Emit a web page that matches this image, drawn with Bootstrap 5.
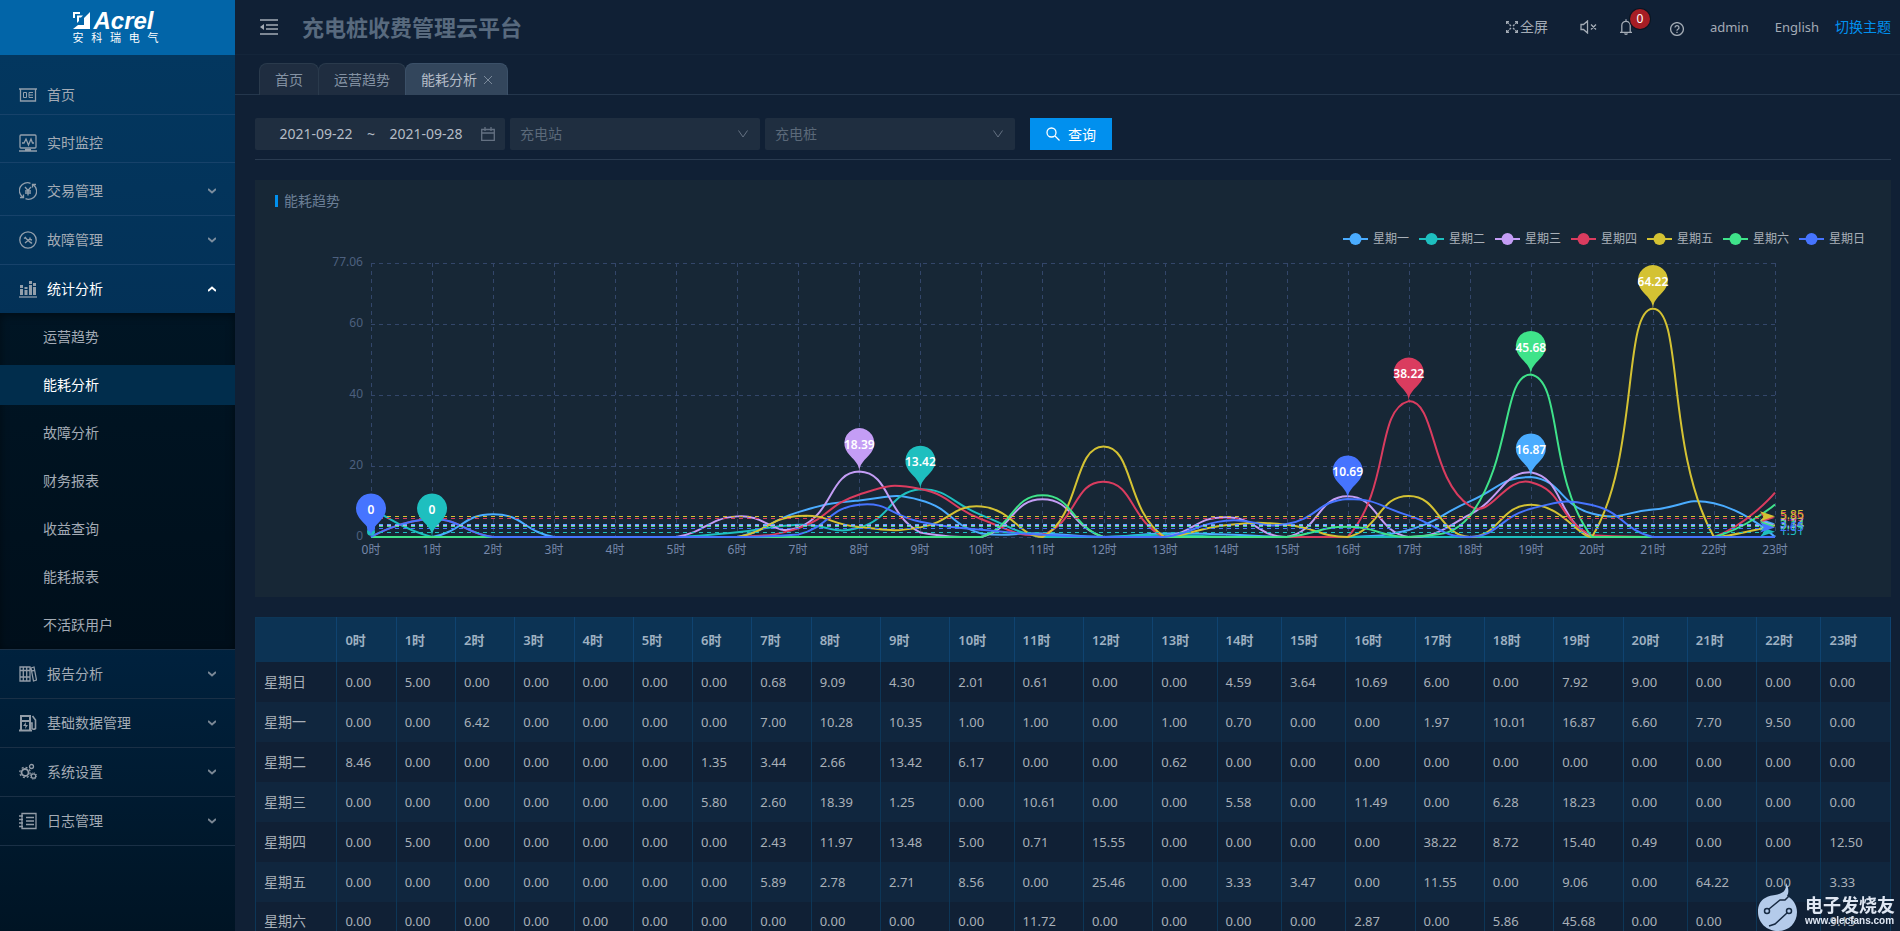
<!DOCTYPE html>
<html lang="zh-CN" data-bs-theme="dark">
<head>
<meta charset="utf-8">
<meta name="viewport" content="width=device-width, initial-scale=1">
<title>充电桩收费管理云平台</title>
<link href="https://cdn.jsdelivr.net/npm/bootstrap@5.3.0/dist/css/bootstrap.min.css" rel="stylesheet">
<style>
  :root { --page: #102035; --line: #24364c; --muted: #a3abb5; --brand: #0190ee; }
  body { font-family: "Noto Sans", "Noto Sans CJK SC", sans-serif; font-size: 14px; line-height: 22px; background: var(--page); color: var(--muted); }
  a { color: inherit; text-decoration: none; }
  svg { display: block; flex: none; }
  .ico { fill: none; stroke: currentColor; stroke-width: 1.3; }

  /* side menu */
  .side { width: 235px; background: linear-gradient(180deg, #03375f 55px, #033157 320px, #00213d 660px, #001424 931px); }
  .brand { height: 55px; padding-right: 4px; background: #0265a8; color: #fff; }
  .brand-mark { width: 86px; }
  .brand-name { font: italic bold 24px/20px "Liberation Sans", sans-serif; }
  .brand-cn { font-size: 11px; line-height: 14px; text-align-last: justify; }
  .side-item { height: 49px; padding: 0 19px; gap: 10px; border-bottom: 1px solid #17426a; }
  .side-item:hover, .side-item.open { color: #fff; }
  .side-item.open { border-bottom: 0; height: 48px; }
  .side-item .ico { color: var(--muted); opacity: .9; }
  .side-item .caret { stroke-width: 2; opacity: .75; }
  .side-item.open .caret { color: #fff; opacity: 1; }
  .side-item.low { border-color: #1a3046; }
  .side-first { height: 40px; margin-top: 20px; }
  .side-plain { height: 48px; padding-top: 8px; }
  .side-tall { height: 53px; padding-top: 4px; }
  .side-sub { background: linear-gradient(180deg, #001524, #000f1b); box-shadow: inset 0 2px 8px rgba(0,0,0,.45); border-bottom: 1px solid #1a3046; }
  .side-sub li { padding: 4px 0; }
  .side-sub a { display: block; height: 40px; line-height: 40px; padding-left: 43px; }
  .side-sub a.active { background: #012d4c; color: #fff; }

  /* top bar */
  .topbar { height: 55px; padding: 0 9px 0 25px; border-bottom: 1px solid #14253a; }
  .topbar h1 { font-size: 22px; line-height: 32px; font-weight: 700; color: #586a7e; }
  .tool { background: none; border: 0; padding: 0; color: var(--muted); }
  .full { gap: 2px; margin-right: 32px; }
  .mute { margin-right: 23px; }
  .notice { margin-right: 38px; }
  .notice-count { position: absolute; left: 10px; top: -10px; width: 20px; height: 20px; border-radius: 10px; background: #a61d24; color: #fff; font-size: 12px; line-height: 20px; text-align: center; box-shadow: 0 0 0 1px #0a1522; }
  .latin { font-size: 13px; margin-left: 26px; }
  .theme { color: var(--brand); }
  .tabs { padding: 8px 24px 0; height: 40px; border-bottom: 1px solid var(--line); }
  .tab { height: 32px; padding: 0 15px; border: 1px solid #2a3a4c; border-bottom: 0; border-radius: 8px 8px 0 0; background: #1f2d40; color: #8492a3; margin-right: -1px; }
  .tab.active { background: #33465c; border-color: #3b5068; color: #b3bcc7; gap: 7px; }
  .tab.active .ico { color: #7b8a9b; }

  /* filters */
  .content { padding: 23px 9px 0 20px; }
  .filters { gap: 5px; padding-bottom: 9px; border-bottom: 1px solid #2a3b50; }
  .field { width: 250px; height: 32px; background-color: #1f2e40; border: 0; border-radius: 2px; color: #b5bcc5; }
  .date-range { padding: 0 10px; }
  .field input { flex: 1 1 0; min-width: 0; background: none; border: 0; padding: 0; color: inherit; text-align: center; }
  .date-range .ico { color: #647182; margin-left: 4px; }
  .form-select.field { font-size: 14px; line-height: 22px; padding: 0 40px 0 10px; color: #5b6979; background-size: 14px 14px; background-position: right 10px center;
    --bs-form-select-bg-img: url("data:image/svg+xml,%3csvg xmlns='http://www.w3.org/2000/svg' viewBox='0 0 14 14' fill='none' stroke='%23647182'%3e%3cpath d='M2.500 3.500 7 10l4.500-6.500'/%3e%3c/svg%3e"); }
  .btn-query { width: 82px; height: 32px; margin-left: 10px; padding: 0; gap: 8px; border: 0; border-radius: 0; background: var(--brand); color: #fff; font-size: 14px; }

  /* chart */
  .panel { margin-top: 20px; background: #172736; }
  .panel h2 { font-size: 14px; line-height: 22px; font-weight: 400; color: #6b7f96; margin: 0; padding: 10px 20px 16px; gap: 6px; }
  .panel h2::before { content: ""; width: 3px; height: 12px; background: var(--brand); }
  .legend-row { gap: 10px; padding: 0 26px 0 0; font-size: 12px; color: #a9b0b8; }
  .legend-row li { gap: 5px; }
  .chart { width: 100%; height: 347px; font-size: 12px; }

  /* table */
  .hours { --bs-table-bg: transparent; table-layout: fixed; margin: 20px 0 0; border: 1px solid #0d3657; color: var(--muted); }
  .hours th, .hours td { height: 40px; padding: 0 0 0 8px; vertical-align: middle; border: solid #0d3657; border-width: 0 1px 0 0; color: #a9b0b8; font-size: 13px; font-weight: 400; }
  .hours thead th { height: 44px; background: #0c3354; border-color: #0f4370; font-weight: 600; color: #9fb1c2; }
  .hours tbody th { font-size: 14px; }
  .hours tbody tr:nth-child(even) { background: #10263e; }
  .w-first { width: 81px; } .w-a { width: 59px; } .w-b { width: 64px; } .w-c { width: 69px; }

  .scroller { scrollbar-width: none; }
  .scroller::-webkit-scrollbar { display: none; }

  .stamp { position: fixed; right: 5px; bottom: 0; gap: 7px; color: #dfe6f2; pointer-events: none; }
  .stamp b { font-size: 18px; line-height: 20px; }
  .stamp small { font: bold 10px/12px "Liberation Sans", sans-serif; }
</style>
</head>
<body class="d-flex vh-100 overflow-hidden">

<aside class="side flex-shrink-0 h-100 overflow-hidden">
  <a href="#" class="brand d-flex justify-content-center align-items-center">
    <span class="brand-mark">
      <span class="d-flex gap-1 align-items-center">
        <svg width="17" height="17" viewBox="0 0 17 17"><path fill="#fff" d="M17 0v17H0l5-4h6V6zM0 0h7v2H2v4H0zM4 3.500h6L8 5.500H6V9l-2 2z"/></svg>
        <span class="brand-name">Acrel</span>
      </span>
      <span class="brand-cn d-block">安科瑞电气</span>
    </span>
  </a>
  <nav class="d-flex flex-column">
    <a href="#" class="side-item side-first d-flex align-items-center">
      <svg class="ico" width="18" height="18" viewBox="0 0 18 18"><path d="M0 3h18M1.500 3v12h15V3"/><path stroke-width="1" d="M4.500 6.500h3v5h-3zM10 6.500v5M14 6.500h-4M10 9h4M10 11.500h4"/></svg>首页</a>
    <a href="#" class="side-item side-plain d-flex align-items-center">
      <svg class="ico" width="18" height="18" viewBox="0 0 18 18"><rect x="1" y="1" width="16" height="13" rx="1"/><path d="M3 9h2l2-4 2.500 6L12 5l1.500 4H15M0 17h18M6 15.500h6"/></svg>实时监控</a>
    <a href="#" class="side-item side-tall d-flex align-items-center">
      <svg class="ico" width="18" height="18" viewBox="0 0 18 18"><path d="M3.500 15A8 8 0 0 1 11.500 1.300M14.500 3A8 8 0 0 1 6.500 16.700M1 15.500h3.500V12.500M17 2.500h-3.500v3M6 5l3 3.500L12 5M9 8.500V13.500M6 9h6M6 11h6"/></svg>交易管理
      <svg class="ico caret ms-auto" width="8" height="6" viewBox="0 0 8 6"><path d="M0 1l4 3.500L8 1"/></svg></a>
    <a href="#" class="side-item d-flex align-items-center">
      <svg class="ico" width="18" height="18" viewBox="0 0 18 18"><circle cx="9" cy="9" r="8.200"/><path d="M6.500 7l5.500 5M6 12l5.500-4.500M5 7.500L7 6M11 6.500v2l2 .5M11.500 11l1.500 1.500"/></svg>故障管理
      <svg class="ico caret ms-auto" width="8" height="6" viewBox="0 0 8 6"><path d="M0 1l4 3.500L8 1"/></svg></a>
    <a href="#" class="side-item open d-flex align-items-center">
      <svg class="ico" width="18" height="18" viewBox="0 0 18 18"><path d="M0 17h18"/><path stroke-width="3" d="M2.500 5v3M2.500 9v6M7 7v2M7 10v5M11.500 1v3M11.500 5v10M15.500 3v3M15.500 7v8"/></svg>统计分析
      <svg class="ico caret ms-auto" width="8" height="6" viewBox="0 0 8 6"><path d="M0 5l4-3.500L8 5"/></svg></a>
    <ul class="side-sub list-unstyled mb-0">
      <li><a href="#">运营趋势</a></li>
      <li><a href="#" class="active" aria-current="page">能耗分析</a></li>
      <li><a href="#">故障分析</a></li>
      <li><a href="#">财务报表</a></li>
      <li><a href="#">收益查询</a></li>
      <li><a href="#">能耗报表</a></li>
      <li><a href="#">不活跃用户</a></li>
    </ul>
    <a href="#" class="side-item low d-flex align-items-center">
      <svg class="ico" width="18" height="18" viewBox="0 0 18 18"><path d="M1 2h10v14H1zM4.300 2v14M7.700 2v14M1 5.500h10M1 12h10M12 3l3-1 2.500 13-3 1zM12.500 6l3-.7"/></svg>报告分析
      <svg class="ico caret ms-auto" width="8" height="6" viewBox="0 0 8 6"><path d="M0 1l4 3.500L8 1"/></svg></a>
    <a href="#" class="side-item low d-flex align-items-center">
      <svg class="ico" width="18" height="18" viewBox="0 0 18 18"><path stroke-width="2" d="M2 16V2h9v14M0 16.500h13M2 7h9"/><path stroke-width="1.600" d="M11 9h2v5.500q1.500 1.500 3.500 0V6l-3-4"/><path fill="currentColor" stroke="none" d="M7 8l-3 4h2.500L6 15l3-4H6.800z"/></svg>基础数据管理
      <svg class="ico caret ms-auto" width="8" height="6" viewBox="0 0 8 6"><path d="M0 1l4 3.500L8 1"/></svg></a>
    <a href="#" class="side-item low d-flex align-items-center">
      <svg class="ico" width="18" height="18" viewBox="0 0 18 18"><circle cx="6" cy="9.500" r="3.500" stroke-width="1.800"/><circle cx="6" cy="9.500" r="5.200" stroke-dasharray="2 2.080"/><circle cx="12.500" cy="3.500" r="2"/><circle cx="14.500" cy="13" r="2.200"/><circle cx="14.500" cy="13" r="3.200" stroke-width="1" stroke-dasharray="1.200 1.300"/></svg>系统设置
      <svg class="ico caret ms-auto" width="8" height="6" viewBox="0 0 8 6"><path d="M0 1l4 3.500L8 1"/></svg></a>
    <a href="#" class="side-item low d-flex align-items-center">
      <svg class="ico" width="18" height="18" viewBox="0 0 18 18"><path d="M3 1.500h14v15H3zM7 5.500h8M7 9h8M7 12.500h8M0 4h4M0 7.500h4M0 11h4M0 14.500h4"/></svg>日志管理
      <svg class="ico caret ms-auto" width="8" height="6" viewBox="0 0 8 6"><path d="M0 1l4 3.500L8 1"/></svg></a>
  </nav>
</aside>

<div class="scroller flex-grow-1 h-100 overflow-auto">
  <header class="topbar d-flex align-items-center">
    <button class="tool me-4" type="button" aria-label="收起菜单">
      <svg class="ico" width="18" height="18" viewBox="0 0 18 18"><path stroke-width="1.600" d="M0 2h18M6 7h12M6 11h12M0 16h18"/><path fill="currentColor" stroke="none" d="M0 9l4-3v6z"/></svg></button>
    <h1 class="mb-0">充电桩收费管理云平台</h1>
    <div class="ms-auto d-flex align-items-center">
      <button class="tool full d-flex align-items-center" type="button">
        <svg class="ico" width="12" height="12" viewBox="0 0 12 12"><path stroke-dasharray="2.500 1" d="M1 1l4 4M11 1L7 5M1 11l4-4M11 11L7 7"/><path d="M.6 3V.6H3M9 .6h2.400V3M.6 9v2.400H3M9 11.400h2.400V9"/></svg>全屏</button>
      <button class="tool mute" type="button" aria-label="静音">
        <svg class="ico" width="17" height="14" viewBox="0 0 17 14"><path d="M1 4.500h2.500L7.500 1v12L3.500 9.500H1zM11 4.500l5 5M16 4.500l-5 5"/></svg></button>
      <button class="tool notice position-relative" type="button" aria-label="通知">
        <svg class="ico" width="12" height="16" viewBox="0 0 12 16"><path d="M0 13.400h12M1.800 13V6.500a4.200 4.200 0 0 1 8.400 0V13M6 .3v2M4.500 14.500q1.500 1.500 3 0"/></svg>
        <span class="notice-count">0</span></button>
      <button class="tool mt-1" type="button" aria-label="帮助">
        <svg class="ico" width="14" height="14" viewBox="0 0 14 14"><circle cx="7" cy="7" r="6.400"/><path d="M5 5.600a2 2 0 1 1 2.600 1.900q-.6.300-.6 1.200M7 9.700V11"/></svg></button>
      <a href="#" class="latin">admin</a>
      <a href="#" class="latin">English</a>
      <a href="#" class="theme ms-3">切换主题</a>
    </div>
  </header>

  <nav class="tabs d-flex">
    <a href="#" class="tab d-flex align-items-center">首页</a>
    <a href="#" class="tab d-flex align-items-center">运营趋势</a>
    <a href="#" class="tab active d-flex align-items-center" aria-current="page">能耗分析
      <svg class="ico" width="8" height="8" viewBox="0 0 8 8"><path stroke-width="1" d="M0 0l8 8M8 0L0 8"/></svg></a>
  </nav>

  <main class="content">
    <form class="filters d-flex">
      <div class="field date-range d-flex align-items-center">
        <input type="text" value="2021-09-22" aria-label="开始日期"><span>~</span>
        <input type="text" value="2021-09-28" aria-label="结束日期">
        <svg class="ico" width="14" height="14" viewBox="0 0 14 14"><path d="M.7 2.500h12.600v10.800H.7zM.7 6h12.600M4 0v4M10 0v4"/></svg>
      </div>
      <select class="form-select field" aria-label="充电站"><option>充电站</option></select>
      <select class="form-select field" aria-label="充电桩"><option>充电桩</option></select>
      <button class="btn btn-query d-flex align-items-center justify-content-center" type="button">
        <svg class="ico" width="14" height="14" viewBox="0 0 14 14"><circle cx="5.500" cy="5.500" r="4.500"/><path d="M9 9l4.500 4.500"/></svg>查询</button>
    </form>

    <section class="panel">
      <h2 class="d-flex align-items-center">能耗趋势</h2>
      <ul class="legend-row list-unstyled d-flex justify-content-end mb-0" id="legend"></ul>
      <svg class="chart" id="chart" role="img" aria-label="能耗趋势"></svg>
    </section>

    <table class="hours table" id="hours"></table>
  </main>
</div>

<div class="stamp d-flex align-items-end">
  <svg width="40" height="48" viewBox="0 0 40 48"><path fill="#b4cbea" d="M28 0c3 5 3 10 1 13 6 3 10 9 10 16 0 11-8 19-19 19S0 40 0 29C0 16 9 13 17 12 24 11 29 8 28 0z"/><path fill="none" stroke="#172a42" stroke-width="1.500" d="M11 26L22 17h5l4-4M29 30L17 41l-6 2"/><circle cx="9" cy="28" r="2.500" fill="none" stroke="#172a42" stroke-width="1.500"/><circle cx="31" cy="28" r="2.500" fill="none" stroke="#172a42" stroke-width="1.500"/></svg>
  <span class="d-flex flex-column pb-1"><b>电子发烧友</b><small>www.elecfans.com</small></span>
</div>

<script src="https://cdn.jsdelivr.net/npm/bootstrap@5.3.0/dist/js/bootstrap.bundle.min.js"></script>
<script>
// hour: kWh, missing hours are zero
const days = [
  { name: '星期一', color: '#4aacff', use: {2:6.42,7:7,8:10.28,9:10.35,10:1,11:1,13:1,14:.7,17:1.97,18:10.01,19:16.87,20:6.6,21:7.7,22:9.5} },
  { name: '星期二', color: '#1ebfbf', use: {0:8.46,6:1.35,7:3.44,8:2.66,9:13.42,10:6.17,13:.62} },
  { name: '星期三', color: '#c49df5', use: {6:5.8,7:2.6,8:18.39,9:1.25,11:10.61,14:5.58,16:11.49,18:6.28,19:18.23} },
  { name: '星期四', color: '#da3c5f', use: {1:5,7:2.43,8:11.97,9:13.48,10:5,11:.71,12:15.55,17:38.22,18:8.72,19:15.4,20:.49,23:12.5} },
  { name: '星期五', color: '#d4c233', use: {7:5.89,8:2.78,9:2.71,10:8.56,12:25.46,14:3.33,15:3.47,17:11.55,19:9.06,21:64.22,23:3.33} },
  { name: '星期六', color: '#3fe38a', use: {11:11.72,16:2.87,18:5.86,19:45.68,23:9.15} },
  { name: '星期日', color: '#4674ff', use: {1:5,7:.68,8:9.09,9:4.3,10:2.01,11:.61,14:4.59,15:3.64,16:10.69,17:6,19:7.92,20:9} }
];
days.forEach(d => d.v = Array.from({ length: 24 }, (_, h) => d.use[h] || 0));

document.getElementById('legend').innerHTML = days.map(d =>
  `<li class="d-flex align-items-center"><svg width="25" height="12"><path d="M0 6h25" stroke="${d.color}" stroke-width="2"/><circle cx="12.5" cy="6" r="6" fill="${d.color}"/></svg>${d.name}</li>`).join('');

// two-digit columns are wider than the rest
const wide = 'aaaaaaaaccbccbbbccccbcbc';
const rows = [days[6], ...days.slice(0, 6)];
document.getElementById('hours').innerHTML =
  '<colgroup><col class="w-first">' + [...wide].map(w => `<col class="w-${w}">`).join('') + '</colgroup>' +
  '<thead><tr><th></th>' + days[0].v.map((_, h) => `<th scope="col">${h}时</th>`).join('') + '</tr></thead><tbody>' +
  rows.map(d => `<tr><th scope="row">${d.name}</th>` + d.v.map(n => `<td>${n.toFixed(2)}</td>`).join('') + '</tr>').join('') + '</tbody>';

function curve(p) {
  const ys = p.map(q => q[1]), lo = Math.min(...ys), hi = Math.max(...ys);
  const fit = c => [c[0], Math.max(lo, Math.min(hi, c[1]))];
  let path = `M${p[0]}`, c0 = p[0];
  for (let i = 1; i < p.length; i++) {
    const a = p[i - 1], b = p[i], n = p[i + 1];
    let c1 = b, next = b;
    if (n) {
      const vx = n[0] - a[0], vy = n[1] - a[1];
      const before = Math.hypot(b[0] - a[0], b[1] - a[1]), after = Math.hypot(n[0] - b[0], n[1] - b[1]);
      const r = after / (before + after);
      c1 = [b[0] - vx * .5 * (1 - r), b[1] - vy * .5 * (1 - r)];
      next = [b[0] + vx * .5 * r, b[1] + vy * .5 * r];
    }
    path += `C${fit(c0)} ${fit(c1)} ${b}`;
    c0 = next;
  }
  return path;
}

function pin(x, y, color, text) {
  const r = 15, dy = r * r / 35, cy = y - 35 + dy, k = dy / r, dx = Math.sqrt(1 - k * k) * r, s = k * 9, t = dx / r * 9;
  return `<path fill="${color}" d="M${x - dx} ${cy + dy}A15 15 0 1 1 ${x + dx} ${cy + dy}C${x + dx - s} ${cy + dy + t} ${x} ${y - 10} ${x} ${y}C${x} ${y - 10} ${x - dx + s} ${cy + dy + t} ${x - dx} ${cy + dy}"/>` +
    `<text x="${x}" y="${y - 23}" fill="#fff" font-weight="600" text-anchor="middle">${text}</text>`;
}

function draw() {
  const svg = document.getElementById('chart'), W = svg.clientWidth;
  const L = 116, R = W - 116, top = 13, base = 287, max = 77.06;
  const X = h => L + (R - L) * h / 23, Y = v => base - (base - top) * v / max;
  let grid = '', labels = '', lines = '', marks = '', pins = '';
  [77.06, 60, 40, 20, 0].forEach(v => {
    const y = Math.round(Y(v));
    grid += `<path d="M${L} ${y}H${R}"/>`;
    labels += `<text x="${L - 8}" y="${y + 3}" fill="#4d607f" text-anchor="end">${v}</text>`;
  });
  for (let h = 0; h < 24; h++) {
    const x = Math.round(X(h));
    grid += `<path d="M${x} ${top}V${base}"/>`;
    labels += `<text x="${x}" y="${base + 17}" fill="#7688aa" text-anchor="middle">${h}时</text>`;
  }
  // days that share their first idle hour share one zero pin, the last day's on top
  const zeroPins = new Map();
  days.forEach(d => {
    const p = d.v.map((v, h) => [X(h), Y(v)]);
    lines += `<path d="${curve(p)}" stroke="${d.color}"/>`;
    const avg = d.v.reduce((a, b) => a + b) / 24, y = Y(avg);
    marks += `<path d="M${L} ${Math.round(y)}H${R - 8}" stroke="${d.color}" stroke-dasharray="4 4" shape-rendering="crispEdges"/>` +
      `<circle cx="${L}" cy="${y}" r="4" fill="${d.color}"/><path fill="${d.color}" d="M${R} ${y}l-15-5 4 5-4 5z"/>` +
      `<text x="${R + 5}" y="${y + 3}" fill="${d.color}">${(avg + 1e-6).toFixed(2)}</text>`;
    const hi = Math.max(...d.v), zero = d.v.indexOf(0);
    pins += pin(X(d.v.indexOf(hi)), Y(hi), d.color, hi);
    zeroPins.set(zero, pin(X(zero), Y(0), d.color, 0));
  });
  svg.innerHTML = `<g stroke="#33466a" stroke-dasharray="4 4" shape-rendering="crispEdges">${grid}</g>` +
    labels + `<g fill="none" stroke-width="2">${lines}</g>` + marks + pins + [...zeroPins.values()].join('');
}
draw();
addEventListener('resize', draw);
</script>
</body>
</html>
